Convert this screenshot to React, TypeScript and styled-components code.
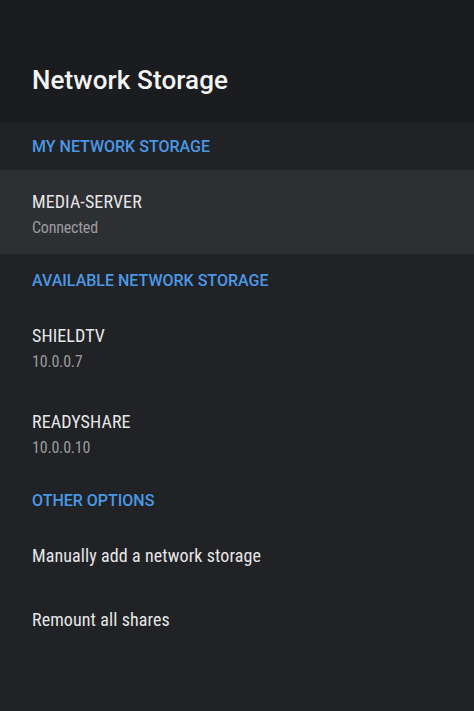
import React from "react";
import styled, { createGlobalStyle } from "styled-components";

const GlobalStyle = createGlobalStyle`
  html, body {
    margin: 0;
    padding: 0;
    background: #212226;
  }
  body {
    font-family: Roboto, "Noto Sans", "Liberation Sans", sans-serif;
    -webkit-font-smoothing: antialiased;
  }
`;

interface StorageItem {
  name: string;
  detail?: string;
  selected?: boolean;
}

interface Section {
  title: string;
  items: StorageItem[];
}

const sections: Section[] = [
  {
    title: "MY NETWORK STORAGE",
    items: [{ name: "MEDIA-SERVER", detail: "Connected", selected: true }],
  },
  {
    title: "AVAILABLE NETWORK STORAGE",
    items: [
      { name: "SHIELDTV", detail: "10.0.0.7" },
      { name: "READYSHARE", detail: "10.0.0.10" },
    ],
  },
  {
    title: "OTHER OPTIONS",
    items: [
      { name: "Manually add a network storage" },
      { name: "Remount all shares" },
    ],
  },
];

const Screen = styled.div`
  display: flex;
  flex-direction: column;
  width: 474px;
  min-height: 711px;
  background: #212226;
`;

const Header = styled.header`
  display: flex;
  align-items: flex-end;
  height: 122px;
  padding: 0 32px 27px;
  box-sizing: border-box;
  background: #1b1c1f;
`;

const Title = styled.h1`
  margin: 0;
  color: #f4f4f4;
  font-size: 26px;
  font-weight: 500;
  line-height: 30px;
  letter-spacing: 0.1px;
`;

const List = styled.div`
  display: flex;
  flex-direction: column;
`;

const SectionHeader = styled.div`
  display: flex;
  align-items: center;
  height: 48px;
  padding: 0 32px;
  color: #4a98e4;
  font-size: 16px;
  font-weight: 500;
`;

// the highlighted row's fill stops 2px short of the row's bottom edge
const Row = styled.div<{ $selected?: boolean; $twoLine?: boolean }>`
  display: flex;
  flex-direction: column;
  justify-content: center;
  gap: 5px;
  height: ${({ $twoLine }) => ($twoLine ? "86px" : "64px")};
  padding: ${({ $twoLine }) => ($twoLine ? "2px 32px 0" : "0 32px")};
  box-sizing: border-box;
  background: ${({ $selected }) =>
    $selected
      ? "linear-gradient(#2e2f33 0 84px, transparent 84px)"
      : "transparent"};
`;

const ItemName = styled.div`
  color: #e6e6e6;
  font-size: 18px;
  font-stretch: 87%;
  line-height: 22px;
  letter-spacing: 0.1px;
`;

const ItemDetail = styled.div`
  color: #9c9c9e;
  font-size: 16px;
  font-stretch: 85%;
  line-height: 20px;
  letter-spacing: -0.2px;
`;

export default function App() {
  return (
    <Screen>
      <GlobalStyle />
      <Header>
        <Title>Network Storage</Title>
      </Header>
      <List>
        {sections.map((section) => (
          <React.Fragment key={section.title}>
            <SectionHeader>{section.title}</SectionHeader>
            {section.items.map((item) => (
              <Row
                key={item.name}
                $selected={item.selected}
                $twoLine={!!item.detail}
              >
                <ItemName>{item.name}</ItemName>
                {item.detail && <ItemDetail>{item.detail}</ItemDetail>}
              </Row>
            ))}
          </React.Fragment>
        ))}
      </List>
    </Screen>
  );
}
